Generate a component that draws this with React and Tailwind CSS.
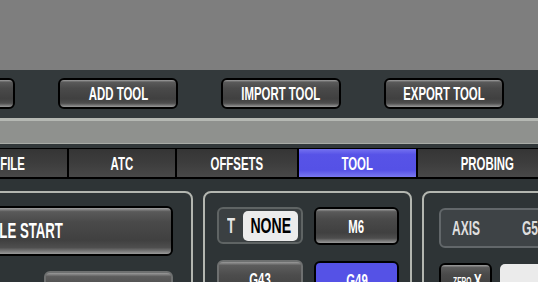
import React from "react";

const FONT = "font-['Liberation_Sans_Narrow','Liberation_Sans','Arial_Narrow',sans-serif] font-bold";

function T({ children, className = "" }) {
  return (
    <span className={`inline-block whitespace-nowrap scale-x-[0.6] leading-none ${className}`}>
      {children}
    </span>
  );
}

function DarkBtn({ className = "", children }) {
  return (
    <div
      className={`flex items-center justify-center border-2 border-black rounded-[6px] bg-[linear-gradient(to_bottom,#a0a0a0_0%,#5a5a5a_8%,#4a4a4a_30%,#404040_70%,#4e4e4e_86%,#9a9a9a_100%)] text-white ${className}`}
    >
      {children}
    </div>
  );
}

function GrayBtn({ className = "", children }) {
  return (
    <div
      className={`flex items-center justify-center border-2 border-[#6e7070] rounded-[6px] bg-[linear-gradient(to_bottom,#9a9a9a_0%,#5c5c5c_10%,#4c4c4c_40%,#424242_80%,#8a8a8a_100%)] text-white ${className}`}
    >
      {children}
    </div>
  );
}

function Tab({ w, active, children }) {
  return (
    <div
      className={`${w} shrink-0 h-full flex items-center justify-center text-white ${
        active
          ? "bg-[linear-gradient(to_bottom,#7471f0_0%,#5753e7_20%,#5551e6_75%,#7a78f0_100%)]"
          : "bg-[linear-gradient(to_bottom,#353535_0%,#3d3d3d_50%,#484848_100%)]"
      }`}
    >
      <T className="text-[19px]">{children}</T>
    </div>
  );
}

export default function App() {
  return (
    <div className={`w-[538px] h-[282px] overflow-hidden bg-[#2e3436] ${FONT}`}>
      <div className="h-[70px] bg-[#7e7e7e]" />
      <div className="h-[48px] bg-[#33393b] pt-[8px] overflow-hidden">
        <div className="flex gap-[43px] ml-[-105px]">
          {["RESET TOOL", "ADD TOOL", "IMPORT TOOL", "EXPORT TOOL"].map((t) => (
            <DarkBtn key={t} className="w-[120px] h-[31px] shrink-0">
              <T className="text-[19px]">{t}</T>
            </DarkBtn>
          ))}
        </div>
      </div>
      <div className="h-[3px] bg-[#b5b8b3]" />
      <div className="h-[22px] bg-[#8f918e]" />
      <div className="h-[1px] bg-[#a9aca7]" />
      <div className="h-[4px] bg-[#32383a]" />
      <div className="h-[31px] bg-black pt-[1px] pb-[2px] overflow-hidden">
        <div className="flex gap-[2px] ml-[-41px] h-full">
          <Tab w="w-[108px]">FILE</Tab>
          <Tab w="w-[106px]">ATC</Tab>
          <Tab w="w-[120px]">OFFSETS</Tab>
          <Tab w="w-[117px]" active>TOOL</Tab>
          <Tab w="w-[138px]">PROBING</Tab>
        </div>
      </div>
      <div className="flex items-start gap-[10px] pt-[12px] ml-[-160px]">
        <div className="w-[353px] h-[140px] shrink-0 border-2 border-[#b3b6b0] rounded-[8px] pt-[13px] pl-[20px] pr-[18px] flex flex-col items-end gap-[15px]">
          <DarkBtn className="w-full h-[50px]">
            <T className="text-[22px]">CYCLE START</T>
          </DarkBtn>
          <GrayBtn className="w-[129px] h-[40px]" />
        </div>
        <div className="w-[209px] h-[140px] shrink-0 border-2 border-[#b3b6b0] rounded-[8px] pt-[14px] pl-[12px] grid grid-cols-[86px_85px] gap-x-[11px] gap-y-[15px] content-start">
          <div className="h-[37px] border-2 border-[#5f6464] rounded-[6px] bg-[#3b4042] flex items-center pl-[8px] pr-[3px]">
            <T className="text-[22px] text-[#e6e6e6] origin-left">T</T>
            <div className="ml-auto w-[55px] h-[30px] rounded-[5px] bg-[#ececec] flex items-center justify-center text-black">
              <T className="text-[22px] scale-x-[0.64]">NONE</T>
            </div>
          </div>
          <DarkBtn className="h-[38px]">
            <T className="text-[19px]">M6</T>
          </DarkBtn>
          <GrayBtn className="h-[38px]">
            <T className="text-[19px]">G43</T>
          </GrayBtn>
          <div className="h-[38px] mt-[1px] border-2 border-black rounded-[6px] bg-[#5552e6] flex items-center justify-center text-white">
            <T className="text-[19px]">G49</T>
          </div>
        </div>
        <div className="w-[200px] h-[140px] shrink-0 border-2 border-[#b3b6b0] rounded-[8px] pt-[15px] pl-[15px]">
          <div className="w-[200px] h-[40px] border-2 border-[#62676a] rounded-[6px] bg-[#3e4346] flex items-center pl-[11px] gap-[23px] text-[#dedede]">
            <T className="text-[20px] origin-left">AXIS</T>
            <T className="text-[20px] origin-left">G54</T>
          </div>
          <div className="flex items-start gap-[8px] mt-[15px]">
            <DarkBtn className="w-[53px] h-[36px] shrink-0">
              <T className="text-[11px] mr-[-6px]">ZERO</T>
              <T className="text-[20px]">X</T>
            </DarkBtn>
            <div className="w-[80px] h-[36px] mt-[1px] rounded-[5px] bg-[#ebebeb]" />
          </div>
        </div>
      </div>
    </div>
  );
}
